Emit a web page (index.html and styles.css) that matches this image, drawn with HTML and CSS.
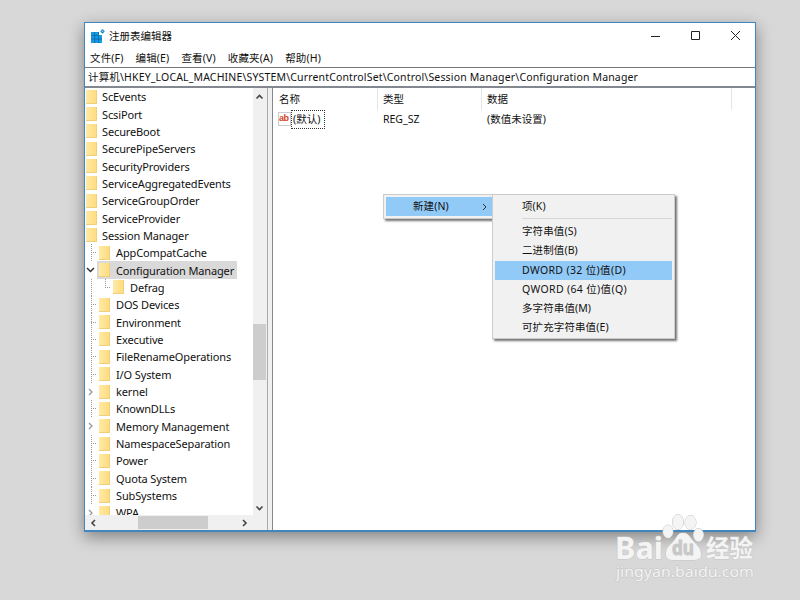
FILE: index.html
```html
<!DOCTYPE html>
<html lang="zh-CN">
<head>
    <meta charset="UTF-8">
    <meta name="viewport" content="width=device-width, initial-scale=1.0">
    <title>注册表编辑器</title>
    <link rel="stylesheet" href="styles.css">
</head>
<body>
    <div class="window">
        <div class="titlebar">
            <svg class="app-icon" width="14" height="14" viewBox="0 0 14 14">
                <path fill="#169be0" d="M0 3h8v3h3v8H0z"/>
                <path stroke="#0a68a8" stroke-width=".8" fill="none" d="M0 6.500h8M0 10h11M3.700 3v11M7.500 3v11"/>
                <path fill="#1686c8" d="M11.200 0l2.600 2-2 2.800-2.600-2z"/>
                <circle cx="11.500" cy="2.300" r=".8" fill="#8fdcff"/>
            </svg>
            <span class="title">注册表编辑器</span>
            <svg class="window-buttons" width="92" height="12" viewBox="0 0 92 12">
                <path d="M2 6.500h9M42.500 1.500h8v8h-8zM82 1l9 9M91 1l-9 9"/>
            </svg>
        </div>
        <div class="menubar">
            <span>文件(F)</span>
            <span>编辑(E)</span>
            <span>查看(V)</span>
            <span>收藏夹(A)</span>
            <span>帮助(H)</span>
        </div>
        <div class="address">计算机\HKEY_LOCAL_MACHINE\SYSTEM\CurrentControlSet\Control\Session Manager\Configuration Manager</div>
        <div class="panes">
            <div class="tree-pane">
                <div class="tree-body">
                    <div class="tree">
                        <div class="row top"><i class="folder"></i><span>ScEvents</span></div>
                        <div class="row top"><i class="folder"></i><span>ScsiPort</span></div>
                        <div class="row top"><i class="folder"></i><span>SecureBoot</span></div>
                        <div class="row top"><i class="folder"></i><span>SecurePipeServers</span></div>
                        <div class="row top"><i class="folder"></i><span>SecurityProviders</span></div>
                        <div class="row top"><i class="folder"></i><span>ServiceAggregatedEvents</span></div>
                        <div class="row top"><i class="folder"></i><span>ServiceGroupOrder</span></div>
                        <div class="row top"><i class="folder"></i><span>ServiceProvider</span></div>
                        <div class="row top"><i class="folder"></i><span>Session Manager</span></div>
                        <div class="row"><i class="line branch"></i><i class="folder"></i><span>AppCompatCache</span></div>
                        <div class="row selected"><svg class="toggle open" width="13" height="10"><path d="M2 3l3.500 3.500L9 3"/></svg><i class="folder"></i><span>Configuration Manager</span></div>
                        <div class="row"><i class="line"></i><i class="line last"></i><i class="folder"></i><span>Defrag</span></div>
                        <div class="row"><i class="line branch"></i><i class="folder"></i><span>DOS Devices</span></div>
                        <div class="row"><i class="line branch"></i><i class="folder"></i><span>Environment</span></div>
                        <div class="row"><i class="line branch"></i><i class="folder"></i><span>Executive</span></div>
                        <div class="row"><i class="line branch"></i><i class="folder"></i><span>FileRenameOperations</span></div>
                        <div class="row"><i class="line branch"></i><i class="folder"></i><span>I/O System</span></div>
                        <div class="row"><svg class="toggle" width="13" height="10"><path d="M4 2l3 3-3 3"/></svg><i class="folder"></i><span>kernel</span></div>
                        <div class="row"><i class="line branch"></i><i class="folder"></i><span>KnownDLLs</span></div>
                        <div class="row"><svg class="toggle" width="13" height="10"><path d="M4 2l3 3-3 3"/></svg><i class="folder"></i><span>Memory Management</span></div>
                        <div class="row"><i class="line branch"></i><i class="folder"></i><span>NamespaceSeparation</span></div>
                        <div class="row"><i class="line branch"></i><i class="folder"></i><span>Power</span></div>
                        <div class="row"><i class="line branch"></i><i class="folder"></i><span>Quota System</span></div>
                        <div class="row"><i class="line branch"></i><i class="folder"></i><span>SubSystems</span></div>
                        <div class="row"><svg class="toggle" width="13" height="10"><path d="M4 2l3 3-3 3"/></svg><i class="folder"></i><span>WPA</span></div>
                    </div>
                    <div class="vscroll">
                        <svg width="13" height="10"><path d="M3.500 6.500l3-3 3 3"/></svg>
                        <div class="vthumb"></div>
                        <svg width="13" height="10"><path d="M3.500 3.500l3 3 3-3"/></svg>
                    </div>
                </div>
                <div class="hscroll">
                    <svg width="12" height="12"><path d="M8 3L5 6l3 3"/></svg>
                    <div class="hthumb"></div>
                    <svg width="12" height="12"><path d="M4 3l3 3-3 3"/></svg>
                </div>
            </div>
            <div class="splitter"></div>
            <div class="list-pane">
                <div class="list-head">
                    <span>名称</span>
                    <span>类型</span>
                    <span>数据</span>
                </div>
                <div class="list-row">
                    <div class="name-cell">
                        <div class="string-icon">ab</div>
                        <span class="value-name">(默认)</span>
                    </div>
                    <span>REG_SZ</span>
                    <span>(数值未设置)</span>
                </div>
            </div>
        </div>
    </div>

    <div class="menu context-menu">
        <div class="menu-item active">新建(N)
            <svg width="8" height="10"><path d="M2 2l3 3-3 3"/></svg>
        </div>
    </div>
    <div class="menu submenu">
        <div class="menu-item">项(K)</div>
        <div class="separator"></div>
        <div class="menu-item">字符串值(S)</div>
        <div class="menu-item">二进制值(B)</div>
        <div class="menu-item active wide">DWORD (32 位)值(D)</div>
        <div class="menu-item wide">QWORD (64 位)值(Q)</div>
        <div class="menu-item">多字符串值(M)</div>
        <div class="menu-item">可扩充字符串值(E)</div>
    </div>

    <svg class="watermark" width="180" height="80" viewBox="0 0 180 80">
        <g class="paw">
            <ellipse cx="77" cy="23.500" rx="5" ry="6.500"/>
            <ellipse cx="87" cy="14" rx="5.500" ry="7.500"/>
            <ellipse cx="99.500" cy="14.500" rx="5.500" ry="7"/>
            <ellipse cx="107.500" cy="27" rx="5" ry="6.500"/>
            <path d="M92 25c6 0 7 5 11 9s7 7 7 13c0 4-4 5-8 5H83c-5 0-8-1-8-6 0-6 3-8 7-12s4-9 10-9z"/>
        </g>
        <text class="logo" x="24" y="51" textLength="48" lengthAdjust="spacingAndGlyphs">Bai</text>
        <text class="du" x="81" y="47" textLength="22" lengthAdjust="spacingAndGlyphs">du</text>
        <text class="logo cn" x="115" y="49" textLength="47" lengthAdjust="spacingAndGlyphs">经验</text>
        <text class="site" x="25" y="69" textLength="138" lengthAdjust="spacingAndGlyphs">jingyan.baidu.com</text>
    </svg>
</body>
</html>
```

FILE: styles.css
```css
body {
    margin: 0;
    height: 600px;
    overflow: hidden;
    background: #d8d8d8;
    color: #111;
    font: 11px/17px "Noto Sans", "Noto Sans CJK SC", sans-serif;
}
i {
    display: block;
}
span {
    white-space: nowrap;
}
svg {
    display: block;
    flex: none;
}
.window {
    box-sizing: border-box;
    width: 672px;
    height: 510px;
    margin: 22px 0 0 84px;
    border: 1px solid #4187be;
    border-bottom-width: 2px;
    background: #fff;
    box-shadow: 0 5px 15px rgba(0, 0, 0, 0.4);
    display: flex;
    flex-direction: column;
    position: absolute;
}
.titlebar {
    height: 26px;
    padding: 0 14px 0 6px;
    display: flex;
    align-items: center;
}
.title {
    flex: 1;
    margin-left: 4px;
    font-size: 10.5px;
}
.window-buttons path {
    fill: none;
    stroke: #222;
}
.menubar {
    height: 17px;
    padding: 1px 0 0 5px;
    display: flex;
    gap: 12px;
    font-size: 10.5px;
    letter-spacing: 0.15px;
}
.address {
    height: 18px;
    padding-left: 3px;
    border-top: 1px solid #777;
    border-bottom: 2px solid #828790;
    line-height: 18px;
    white-space: nowrap;
    font-size: 10.5px;
    letter-spacing: 0.16px;
}

/* panes */
.panes {
    flex: 1;
    min-height: 0;
    display: flex;
}
.tree-pane {
    width: 182px;
    display: flex;
    flex-direction: column;
}
.tree-body {
    height: 427px;
    display: flex;
}
.tree {
    flex: 1;
    overflow: hidden;
}
.row {
    height: 17.35px;
    display: flex;
    align-items: center;
}
.row span {
    padding: 0 3px;
    margin-left: 3px;
    height: 17px;
    letter-spacing: -0.13px;
}
.row.top span {
    margin-left: 2px;
}
.row.selected {
    width: 152px;
    background: linear-gradient(90deg, transparent 12px, #d9d9d9 12px);
}
.folder {
    flex: none;
    box-sizing: border-box;
    width: 11px;
    height: 14px;
    margin-left: 1px;
    border: solid #f0cf78;
    border-width: 0 1px 1px 0;
    background: linear-gradient(90deg, #ffeaa6, #ffdc80);
}
.line {
    flex: none;
    width: 7px;
    height: 100%;
    margin-left: 6px;
    background: repeating-linear-gradient(180deg, #999 0 1px, transparent 1px 2px) 0 0 / 1px 100% no-repeat;
}
.line + .line {
    margin-left: 7px;
}
.line.branch {
    background: repeating-linear-gradient(180deg, #999 0 1px, transparent 1px 2px) 0 0 / 1px 100% no-repeat,
        repeating-linear-gradient(90deg, #999 0 1px, transparent 1px 2px) 0 50% / 6px 1px no-repeat;
}
.line.last {
    background: repeating-linear-gradient(180deg, #999 0 1px, transparent 1px 2px) 0 0 / 1px 50% no-repeat,
        repeating-linear-gradient(90deg, #999 0 1px, transparent 1px 2px) 0 50% / 6px 1px no-repeat;
}
.toggle path {
    fill: none;
    stroke: #999;
    stroke-width: 1.3;
}
.toggle.open path {
    stroke: #333;
    stroke-width: 1.5;
}
.vscroll {
    width: 14px;
    padding: 4px 0 2px;
    background: #f0f0f0;
    display: flex;
    flex-direction: column;
}
.vthumb {
    width: 13px;
    height: 56px;
    margin: 222px 0 auto;
    background: #cdcdcd;
}
.hscroll {
    flex: 1;
    padding: 0 16px 0 2px;
    background: #f0f0f0;
    display: flex;
    align-items: center;
}
.hthumb {
    width: 70px;
    height: 13px;
    margin: 0 auto 0 39px;
    background: #cdcdcd;
}
.vscroll path,
.hscroll path {
    fill: none;
    stroke: #444;
    stroke-width: 1.6;
}
.splitter {
    width: 4px;
    border-left: 1px solid #a5a9b0;
    background: #f0f0f0;
}
.list-pane {
    flex: 1;
    border-left: 1px solid #828790;
}
.list-head,
.list-row {
    display: grid;
    grid-template-columns: 105px 104px 250px;
    font-size: 10.5px;
}
.list-head {
    height: 21px;
    line-height: 22px;
}
.list-head span {
    padding-left: 5px;
    border-right: 1px solid #e5e5e5;
}
.list-head span:first-child {
    padding-left: 6px;
}
.list-row {
    height: 20px;
    align-items: center;
}
.list-row > span {
    padding-left: 5px;
}
.name-cell {
    display: flex;
    align-items: center;
    padding-left: 5px;
}
.string-icon {
    width: 11px;
    height: 12px;
    border: 1px solid #ccc;
    font: bold 9px/10px "Liberation Sans", sans-serif;
    letter-spacing: -0.5px;
    color: #d4411e;
}
.value-name {
    padding: 0 4px 0 1px;
    border: 1px dotted #333;
}

/* popup menus */
.menu {
    position: absolute;
    box-sizing: border-box;
    padding: 2px;
    border: 1px solid #ccc;
    background: #f1f1f1;
    box-shadow: 2px 2px 2px rgba(0, 0, 0, 0.55);
    font-size: 10.5px;
}
.context-menu {
    left: 383px;
    top: 194px;
    width: 112px;
    height: 25px;
}
.submenu {
    left: 492px;
    top: 194px;
    width: 183px;
    height: 145px;
}
.menu-item {
    height: 19.2px;
    padding-left: 27px;
    line-height: 19px;
    white-space: nowrap;
    display: flex;
    align-items: center;
    justify-content: space-between;
    letter-spacing: 0.1px;
}
.menu-item.wide {
    letter-spacing: 0.35px;
}
.menu-item.active {
    background: #91c9f7;
}
.menu-item svg {
    margin-right: 3px;
}
.menu-item path {
    fill: none;
    stroke: #333;
}
.separator {
    height: 1px;
    margin: 2px 0 3px 27px;
    background: #d7d7d7;
}

.watermark {
    position: absolute;
    left: 591px;
    top: 508px;
}
.watermark text,
.paw {
    fill: #f4f4f4;
    stroke: #c4c4c4;
    stroke-width: 1;
    paint-order: stroke;
}
.watermark .logo {
    font: bold 30px "Noto Sans", sans-serif;
}
.watermark .cn {
    font: bold 24px "Noto Sans CJK SC", sans-serif;
}
.watermark .du {
    font: bold 20px "Noto Sans", sans-serif;
    fill: #c9c9c9;
}
.watermark .site {
    font: 14px "Noto Sans", sans-serif;
}
```
